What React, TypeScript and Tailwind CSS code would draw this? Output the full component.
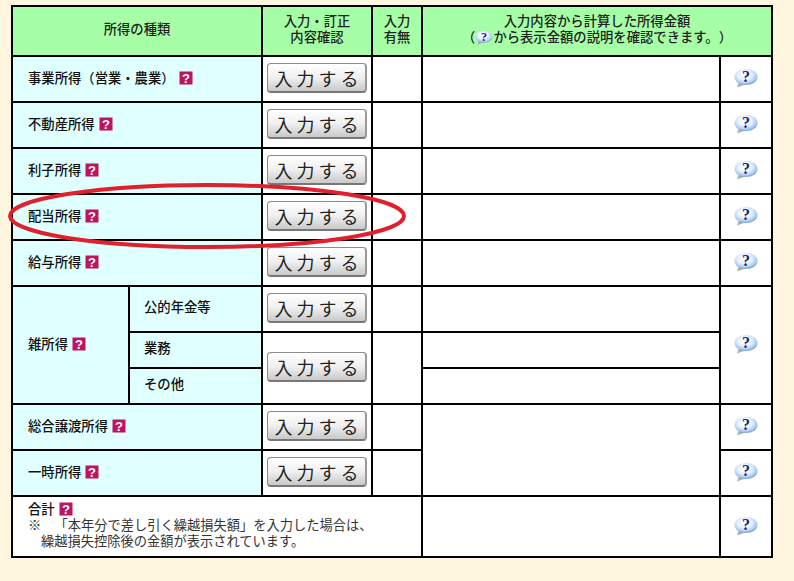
const font = "font-['Noto_Sans_CJK_JP','Liberation_Sans',sans-serif]";

function Hint() {
  return (
    <svg width="14" height="14" viewBox="0 0 14 14" className="inline-block align-[-2px] ml-[4px]">
      <rect x="0.5" y="0.5" width="13" height="13" fill="#c0135f" />
      <text x="7" y="11.5" textAnchor="middle" fontSize="13" fontWeight="700" fontFamily="Liberation Sans" fill="#fff">?</text>
    </svg>
  );
}

function Bubble({ small = false }: { small?: boolean }) {
  const id = small ? "bs" : "bl";
  return (
    <svg
      width={small ? 18 : 24}
      height={small ? 15 : 20}
      viewBox="0 0 24 20"
      className={small ? "inline-block align-[-3px]" : "block mx-auto mb-[2px]"}
    >
      <defs>
        <radialGradient id={id} cx="0.45" cy="0.38" r="0.62">
          <stop offset="0" stopColor="#ffffff" />
          <stop offset="0.5" stopColor="#e6f0fc" />
          <stop offset="0.85" stopColor="#a6c6ee" />
          <stop offset="1" stopColor="#6f9ed8" />
        </radialGradient>
      </defs>
      <path d="M5 14 L3 19.5 L11 16.5 Z" fill="#9fb0bd" />
      <ellipse cx="12" cy="9" rx="11.5" ry="8" fill={`url(#${id})`} />
      <text x="12" y="14" textAnchor="middle" fontSize="16" fontWeight="700" fontFamily="Liberation Serif" fill="#141f78">?</text>
    </svg>
  );
}

function InputButton() {
  return (
    <button className="block mx-auto mb-[2px] w-[100px] h-[30px] rounded-[4px] border border-[#8c8c8c] border-b-2 border-r-2 border-b-[#777] border-r-[#999] bg-gradient-to-b from-[#ffffff] via-[#f0f0f0] to-[#c9c9c9] text-[#222] text-[18px] leading-[26px] tracking-[4px] pl-[4px] whitespace-nowrap">
      入力する
    </button>
  );
}

const td = "border-2 border-black p-0";
const label = `${td} bg-[#e0ffff] pl-[15px] pb-[2px] text-[13.33px] font-medium text-[#111]`;
const subLabel = `${td} bg-[#e0ffff] pl-[14px] pb-[4px] text-[13.33px] font-medium text-[#111]`;
const btnCell = `${td} bg-white text-center`;
const blank = `${td} bg-white`;
const helpCell = `${td} bg-white text-center`;
const head = `${td} bg-[#a6ffa6] text-center pb-[4px] text-[13.33px] leading-[16px] text-[#222] font-medium`;

function Row({ name }: { name: string }) {
  return (
    <tr className="h-[46px]">
      <td colSpan={2} className={label}>
        {name}
        <Hint />
      </td>
      <td className={btnCell}>
        <InputButton />
      </td>
      <td className={blank} />
      <td className={blank} />
      <td className={helpCell}>
        <Bubble />
      </td>
    </tr>
  );
}

export default function App() {
  return (
    <div className={`relative w-[794px] h-[581px] overflow-hidden bg-[#fff6df] pt-[5px] pl-[11px] [text-spacing-trim:space-all] ${font}`}>
      <table className="border-collapse table-fixed w-[762px]">
        <colgroup>
          <col className="w-[117px]" />
          <col className="w-[133px]" />
          <col className="w-[110px]" />
          <col className="w-[50px]" />
          <col className="w-[298px]" />
          <col className="w-[52px]" />
        </colgroup>
        <tbody>
          <tr className="h-[50px]">
            <th colSpan={2} className={head}>所得の種類</th>
            <th className={head}>入力・訂正<br />内容確認</th>
            <th className={head}>入力<br />有無</th>
            <th colSpan={2} className={head}>
              入力内容から計算した所得金額<br />
              （<Bubble small />から表示金額の説明を確認できます。）
            </th>
          </tr>
          <Row name="事業所得（営業・農業）" />
          <Row name="不動産所得" />
          <Row name="利子所得" />
          <Row name="配当所得" />
          <Row name="給与所得" />
          <tr className="h-[46px]">
            <td rowSpan={3} className={label}>
              雑所得
              <Hint />
            </td>
            <td className={`${subLabel} pb-[2px]`}>公的年金等</td>
            <td className={btnCell}><InputButton /></td>
            <td className={blank} />
            <td className={blank} />
            <td rowSpan={3} className={helpCell}><Bubble /></td>
          </tr>
          <tr className="h-[36px]">
            <td className={subLabel}>業務</td>
            <td rowSpan={2} className={btnCell}><InputButton /></td>
            <td rowSpan={2} className={blank} />
            <td className={blank} />
          </tr>
          <tr className="h-[36px]">
            <td className={subLabel}>その他</td>
            <td className={blank} />
          </tr>
          <tr className="h-[46px]">
            <td colSpan={2} className={label}>総合譲渡所得<Hint /></td>
            <td className={btnCell}><InputButton /></td>
            <td className={blank} />
            <td rowSpan={2} className={blank} />
            <td className={helpCell}><Bubble /></td>
          </tr>
          <tr className="h-[46px]">
            <td colSpan={2} className={label}>一時所得<Hint /></td>
            <td className={btnCell}><InputButton /></td>
            <td className={blank} />
            <td className={helpCell}><Bubble /></td>
          </tr>
          <tr className="h-[61px]">
            <td colSpan={4} className={`${td} bg-white pl-[15px] align-top pt-[4px]`}>
              <div className="text-[13.33px] leading-[16px] font-medium text-[#111]">合計<Hint /></div>
              <div className="text-[13.25px] leading-[16px] text-[#333] whitespace-nowrap">※　「本年分で差し引く繰越損失額」を入力した場合は、</div>
              <div className="text-[13.25px] leading-[16px] text-[#333] pl-[13px] whitespace-nowrap">繰越損失控除後の金額が表示されています。</div>
            </td>
            <td className={blank} />
            <td className={helpCell}><Bubble /></td>
          </tr>
        </tbody>
      </table>
      <svg width="420" height="80" viewBox="0 0 420 80" className="absolute left-0 top-[176px] pointer-events-none">
        <ellipse cx="207" cy="40" rx="197" ry="31" fill="none" stroke="#e0202c" strokeWidth="4" />
      </svg>
    </div>
  );
}
